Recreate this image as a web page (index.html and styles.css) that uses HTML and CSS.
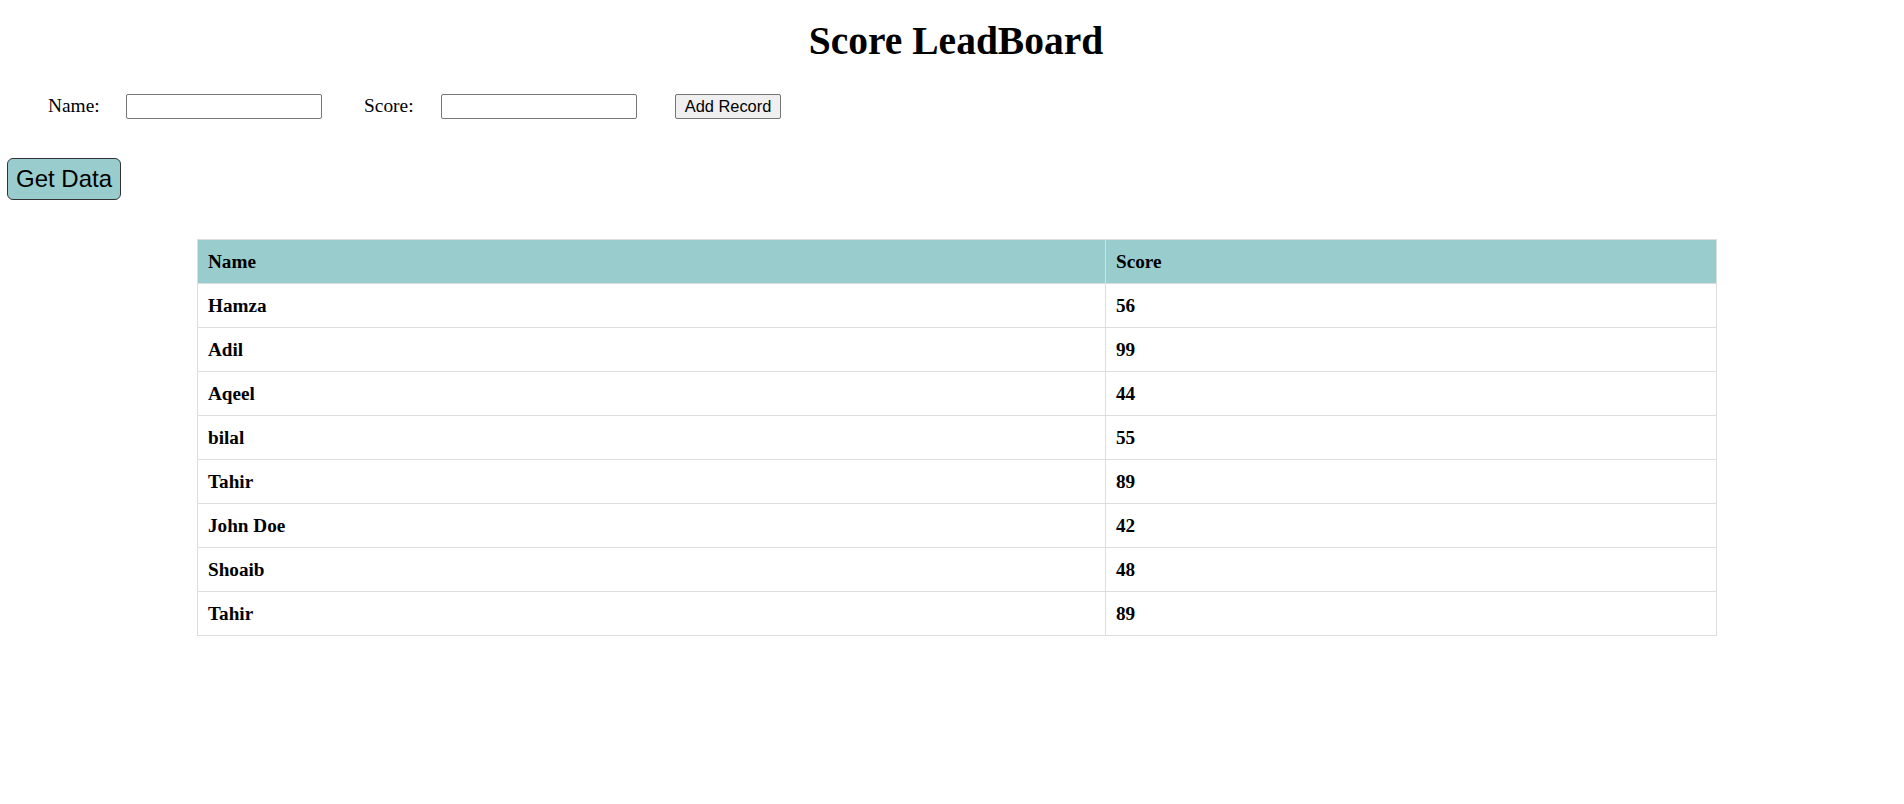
FILE: index.html
```html
<!DOCTYPE html>
<html lang="en">
<head>
<meta charset="utf-8">
<title>Score LeadBoard</title>
<link rel="stylesheet" href="styles.css">
</head>
<body>
  <h1 class="title">Score LeadBoard</h1>
  <form class="record-form">
    <label class="field-label" for="name">Name:</label>
    <input class="field-input field-input-name" type="text" id="name">
    <label class="field-label field-label-score" for="score">Score:</label>
    <input class="field-input field-input-score" type="text" id="score">
    <button class="add-btn" type="button">Add Record</button>
  </form>
  <button class="get-btn" type="button">Get Data</button>
  <table class="board">
    <thead>
      <tr><th class="col-name">Name</th><th class="col-score">Score</th></tr>
    </thead>
    <tbody>
      <tr><td>Hamza</td><td>56</td></tr>
      <tr><td>Adil</td><td>99</td></tr>
      <tr><td>Aqeel</td><td>44</td></tr>
      <tr><td>bilal</td><td>55</td></tr>
      <tr><td>Tahir</td><td>89</td></tr>
      <tr><td>John Doe</td><td>42</td></tr>
      <tr><td>Shoaib</td><td>48</td></tr>
      <tr><td>Tahir</td><td>89</td></tr>
    </tbody>
  </table>
</body>
</html>
```

FILE: styles.css
```css
html, body {
  margin: 0;
  padding: 0;
  background: #ffffff;
}

body {
  font-family: "Liberation Serif", "Times New Roman", serif;
  color: #000000;
}

.title {
  margin: 20px 0 0;
  padding-left: 8px;
  font-size: 39.5px;
  line-height: 43px;
  font-weight: bold;
  text-align: center;
}

.record-form {
  display: flex;
  align-items: center;
  margin: 31px 0 0;
  padding-left: 48px;
  height: 25px;
}

.field-label {
  display: block;
  width: 52px;
  font-size: 19.4px;
  line-height: 22px;
  margin-right: 26px;
  white-space: nowrap;
  position: relative;
  top: -1px;
}

.field-label-score {
  margin-right: 25px;
}

.field-input {
  box-sizing: border-box;
  width: 196px;
  height: 25px;
  border: 1px solid #767676;
  border-radius: 2px;
  background: #ffffff;
  padding: 1px 2px;
  margin: 0;
}

.field-input-name {
  margin-right: 42px;
}

.field-input-score {
  margin-right: 38px;
}

.add-btn {
  box-sizing: border-box;
  width: 106px;
  height: 25px;
  margin: 0;
  padding: 0 4px;
  border: 1px solid #767676;
  border-radius: 2px;
  background: #efefef;
  font-family: "Liberation Sans", Arial, sans-serif;
  font-size: 16.4px;
  color: #000000;
  white-space: nowrap;
}

.get-btn {
  display: block;
  box-sizing: border-box;
  width: 114px;
  height: 42px;
  margin: 39px 0 0 7px;
  padding: 0 4px;
  border: 1px solid #333333;
  border-radius: 6px;
  background: #99cdcd;
  font-family: "Liberation Sans", Arial, sans-serif;
  font-size: 24px;
  color: #000000;
  white-space: nowrap;
}

.board {
  border-collapse: collapse;
  table-layout: fixed;
  width: 1520px;
  margin: 39px 0 0 197px;
  font-size: 19.2px;
}

.board th,
.board td {
  border: 1px solid #dddddd;
  padding: 11px 10px;
  line-height: 21px;
  text-align: left;
  font-weight: bold;
}

.board thead th {
  background: #99cdcd;
}

.col-name {
  width: 887px;
}
```
